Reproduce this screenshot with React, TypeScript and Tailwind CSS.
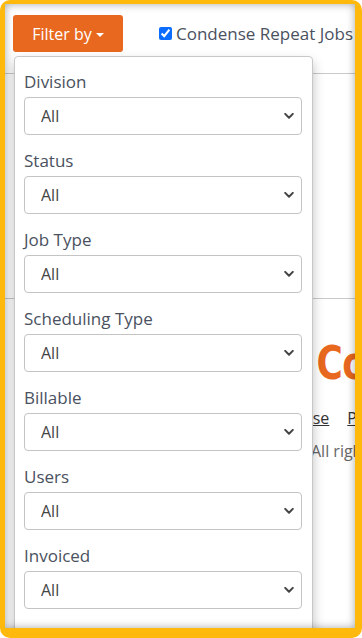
import React from 'react';

const filters = [
  'Division',
  'Status',
  'Job Type',
  'Scheduling Type',
  'Billable',
  'Users',
  'Invoiced',
];

const Chevron = () => (
  <svg
    className="pointer-events-none absolute right-[9px] top-1/2 -translate-y-1/2"
    width="10"
    height="7"
    viewBox="0 0 10 7"
    fill="none"
  >
    <path d="M1.2 1.4 5 5.2 8.8 1.4" stroke="#444" strokeWidth="2" strokeLinecap="round" strokeLinejoin="round" />
  </svg>
);

export default function App() {
  return (
    <div className="h-[638px] w-[362px] overflow-hidden rounded-[10px] bg-[#FFB90C] pb-[10px] pl-[5px] pr-[7px] pt-[4px] font-['Open_Sans',sans-serif]">
      <div className="relative h-full w-full overflow-hidden bg-white">
        {/* page behind the menu */}
        <div className="flex items-center gap-[36px] pl-[8px] pt-[11px]">
          <button className="flex h-[37px] w-[110px] items-center justify-center gap-[4px] rounded-[3px] bg-[#E8681F] text-[16px] text-white">
            Filter by
            <span className="mt-[2px] h-0 w-0 border-x-[4px] border-t-[4px] border-x-transparent border-t-white" />
          </button>
          <label className="flex items-center gap-[4px] whitespace-nowrap text-[17px] text-[#4a5160]">
            <input type="checkbox" defaultChecked className="h-[13px] w-[13px] accent-[#0b6cff]" />
            Condense Repeat Jobs
          </label>
        </div>
        <div className="mt-[21px] border-t border-[#c9c9c9]" />
        <div className="h-[224px]" />
        <div className="border-t border-[#c9c9c9]" />
        <div className="pl-[296px] pt-[41px]">
          <div className="origin-left scale-x-[0.78] whitespace-nowrap pl-[20px] font-['DejaVu_Sans',sans-serif] text-[46px] font-bold leading-[46px] tracking-[-1px] text-[#E8681F]">
            Contact
          </div>
          <div className="mt-[20px] flex gap-[18px] whitespace-nowrap text-[16px] text-[#333]">
            <span className="underline">Use</span>
            <span className="underline">Privacy</span>
          </div>
          <div className="mt-[9px] whitespace-nowrap pl-[10px] text-[16px] text-[#666]">All rights reserved</div>
        </div>

        {/* inset shadow of the frame */}
        <div className="pointer-events-none absolute inset-0 z-20 shadow-[inset_0_0_9px_rgba(0,0,0,0.35)]" />

        {/* dropdown menu */}
        <div className="absolute left-[9px] top-[52px] z-10 w-[299px] rounded-[4px] border border-[#c8c8c8] bg-white px-[9px] pb-[40px] pt-[12px] shadow-[0_6px_12px_rgba(0,0,0,0.25)]">
          {filters.map((f) => (
            <div key={f} className="mb-[13px]">
              <div className="mb-[2px] text-[17px] leading-[26px] text-[#4a5160]">{f}</div>
              <div className="relative">
                <select className="h-[38px] w-[278px] appearance-none rounded-[4px] border border-[#c4c4c4] bg-white pl-[16px] text-[16px] text-[#444] outline-none">
                  <option>All</option>
                </select>
                <Chevron />
              </div>
            </div>
          ))}
        </div>
      </div>
    </div>
  );
}
